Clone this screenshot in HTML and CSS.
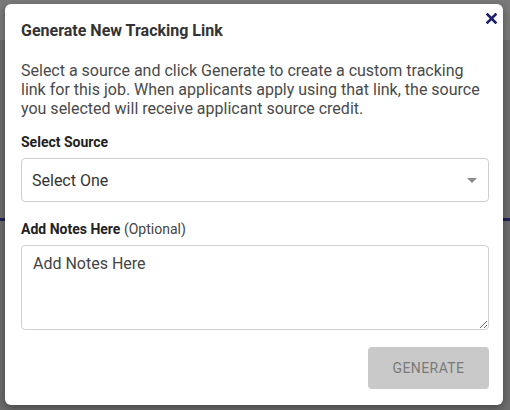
FILE: index.html
```html
<!DOCTYPE html>
<html lang="en">
<head>
    <meta charset="UTF-8">
    <meta name="viewport" content="width=device-width, initial-scale=1.0">
    <title>Generate New Tracking Link</title>
    <link rel="stylesheet" href="styles.css">
</head>
<body>
    <div class="modal">
        <button type="button" class="close" aria-label="Close">
            <svg width="11" height="11" viewBox="0 0 11 11">
                <path d="M1.5 1.5 L9.5 9.5 M9.5 1.5 L1.5 9.5" stroke="#1c1f6b" stroke-width="2.6" stroke-linecap="square"/>
            </svg>
        </button>

        <h2 class="title">Generate New Tracking Link</h2>

        <p class="intro">Select a source and click Generate to create a custom tracking link for this job. When applicants apply using that link, the source you selected will receive applicant source credit.</p>

        <label class="field-label" for="source">Select Source</label>
        <div class="select-wrap">
            <select id="source" class="select">
                <option>Select One</option>
            </select>
            <span class="caret"></span>
        </div>

        <label class="field-label" for="notes">Add Notes Here <span class="optional">(Optional)</span></label>
        <textarea id="notes" class="notes" placeholder="Add Notes Here"></textarea>

        <div class="actions">
            <button type="button" class="generate" disabled>GENERATE</button>
        </div>
    </div>
</body>
</html>
```

FILE: styles.css
```css
html,
body {
    height: 100%;
}

body {
    margin: 0;
    padding: 4px 7px 0 5px;
    box-sizing: border-box;
    font-family: 'Roboto', 'Liberation Sans', sans-serif;
    background:
        linear-gradient(#7a7a7a, #7a7a7a) 0 0 / 100% 40px no-repeat,
        linear-gradient(#1d2156, #1d2156) 0 218px / 100% 3px no-repeat,
        #6c6c6c;
}

.modal {
    position: relative;
    height: 401px;
    box-sizing: border-box;
    padding: 16px 14px 0 16px;
    background-color: #fff;
    border-radius: 6px;
    box-shadow: 0 3px 8px rgba(0, 0, 0, 0.35);
}

.close {
    position: absolute;
    top: 9px;
    right: 6px;
    padding: 0;
    border: 0;
    background: none;
    cursor: pointer;
    line-height: 0;
}

.title {
    margin: 0;
    font-size: 16px;
    font-weight: 700;
    color: #333;
    line-height: 22px;
}

.intro {
    margin: 19px 0 0;
    font-size: 16px;
    line-height: 19px;
    color: #4a4a4a;
}

.field-label {
    display: block;
    margin-top: 16px;
    font-size: 14px;
    font-weight: 700;
    color: #222;
    line-height: 16px;
}

.optional {
    font-weight: 400;
    color: #444;
}

.select-wrap {
    position: relative;
    margin-top: 8px;
}

.select {
    display: block;
    width: 100%;
    height: 44px;
    padding: 0 10px;
    border: 1px solid #cfcfcf;
    border-radius: 4px;
    background: #fff;
    font-family: inherit;
    font-size: 16px;
    color: #333;
    appearance: none;
    -webkit-appearance: none;
}

.caret {
    position: absolute;
    right: 12px;
    top: 20px;
    width: 0;
    height: 0;
    border-left: 5px solid transparent;
    border-right: 5px solid transparent;
    border-top: 5px solid #8a8a8a;
}

.select-wrap + .field-label {
    margin-top: 19px;
}

.notes {
    display: block;
    width: 100%;
    height: 85px;
    margin-top: 8px;
    padding: 8px 11px;
    box-sizing: border-box;
    border: 1px solid #cfcfd4;
    border-radius: 4px;
    font-family: inherit;
    font-size: 16px;
    line-height: 19px;
    color: #333;
}

.notes::placeholder {
    color: #444;
}

.actions {
    display: flex;
    justify-content: flex-end;
    margin-top: 17px;
}

.generate {
    width: 121px;
    height: 42px;
    border: 0;
    border-radius: 4px;
    background-color: #c9c9c9;
    color: #7a7a7a;
    font-family: inherit;
    font-size: 14px;
    letter-spacing: 0.4px;
}
```
